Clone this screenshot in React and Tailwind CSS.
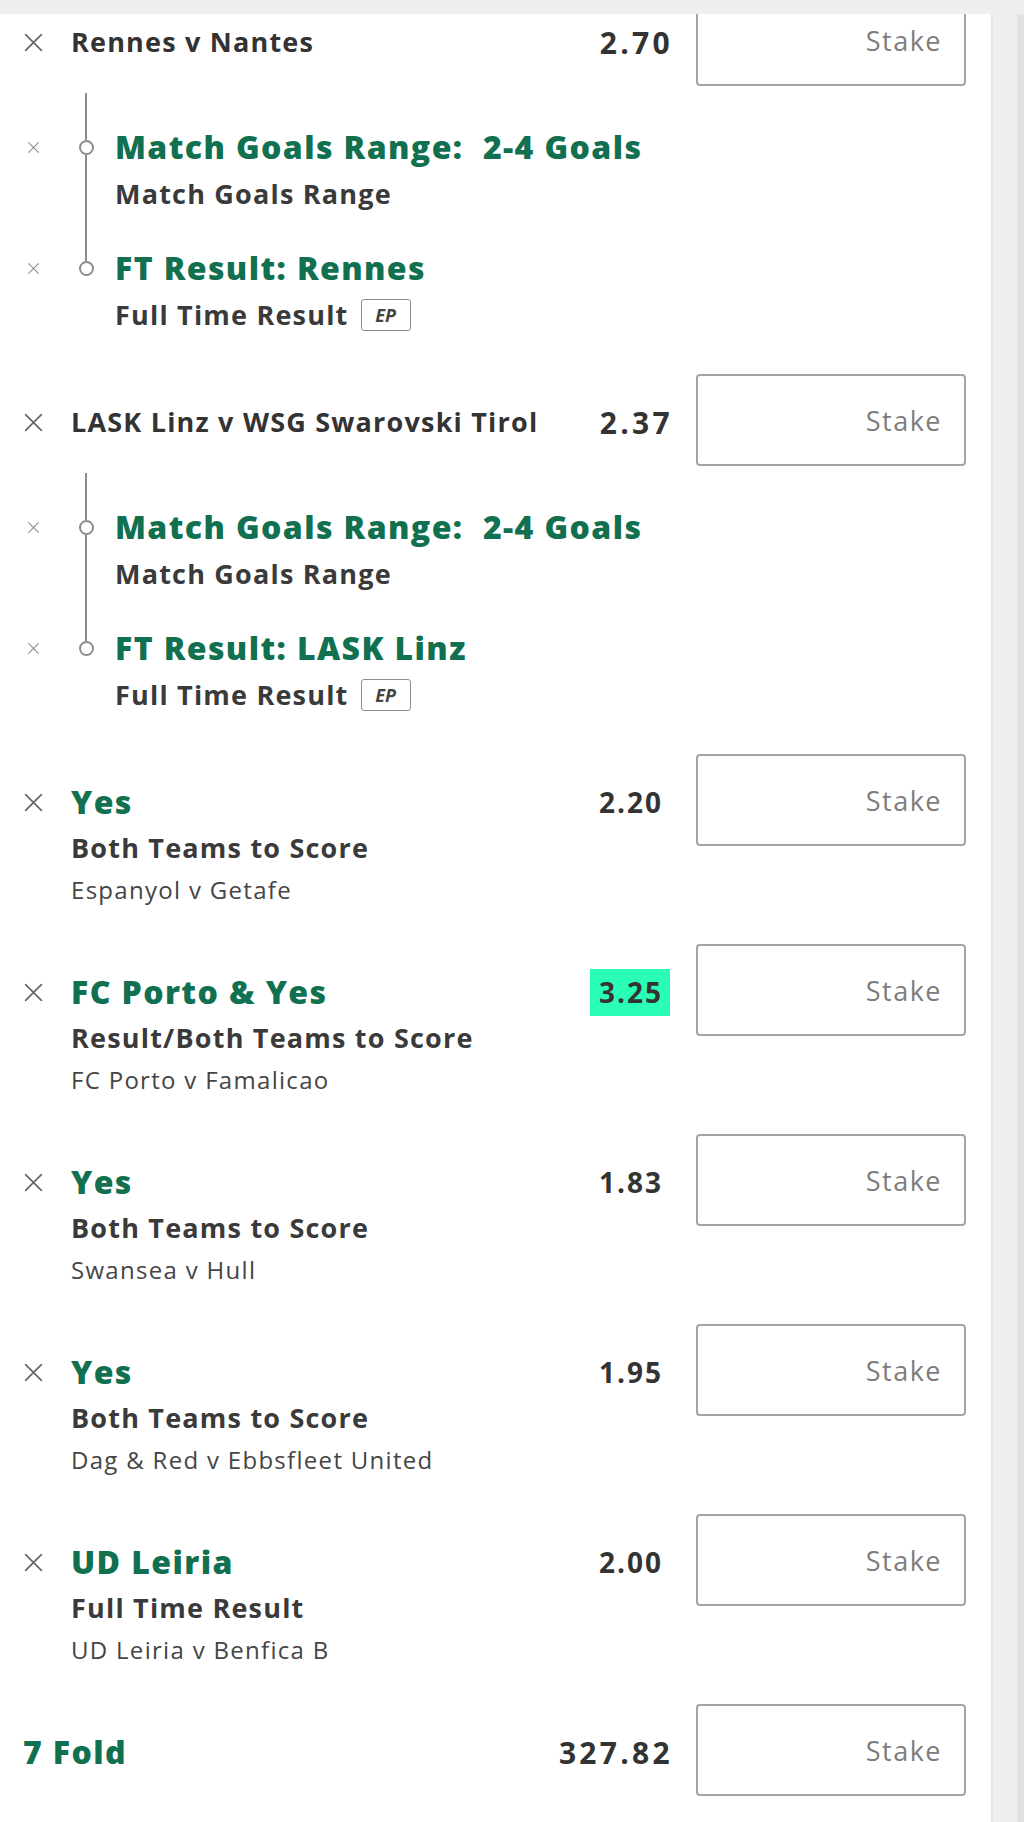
import React from 'react';

const legsRennes = [
  { title: 'Match Goals Range:\u00a0\u00a02-4 Goals', market: 'Match Goals Range' },
  { title: 'FT Result: Rennes', market: 'Full Time Result', ep: true },
];

const legsLask = [
  { title: 'Match Goals Range:\u00a0\u00a02-4 Goals', market: 'Match Goals Range' },
  { title: 'FT Result: LASK Linz', market: 'Full Time Result', ep: true },
];

const singles = [
  { title: 'Yes', odds: '2.20', market: 'Both Teams to Score', event: 'Espanyol v Getafe' },
  { title: 'FC Porto & Yes', odds: '3.25', market: 'Result/Both Teams to Score', event: 'FC Porto v Famalicao', boosted: true },
  { title: 'Yes', odds: '1.83', market: 'Both Teams to Score', event: 'Swansea v Hull' },
  { title: 'Yes', odds: '1.95', market: 'Both Teams to Score', event: 'Dag & Red v Ebbsfleet United' },
  { title: 'UD Leiria', odds: '2.00', market: 'Full Time Result', event: 'UD Leiria v Benfica B' },
];

const Cross = ({ className }) => (
  <svg viewBox="0 0 20 20" className={className} fill="none" stroke="currentColor" strokeWidth="1.6" strokeLinecap="round">
    <path d="M2.5 2.5L17.5 17.5M17.5 2.5L2.5 17.5" />
  </svg>
);

const StakeBox = () => (
  <input
    type="text"
    placeholder="Stake"
    className="ml-[26px] -mt-[28px] -mb-[24px] h-[92px] w-[270px] shrink-0 rounded-[4px] border-2 border-[#a4a4a4] bg-white pr-[22px] text-right text-[27px] tracking-[1.5px] text-[#333] placeholder-[#7c7c7c] outline-none"
  />
);

// one selection of a bet builder; the connector line lives in the middle column
const Leg = ({ leg, last }) => (
  <div className="flex">
    <div className="flex h-[76px] w-[67px] shrink-0 items-end justify-center pb-[15px]">
      <Cross className="h-[13px] w-[13px] text-[#8a8a8a]" />
    </div>
    <div className="flex w-[38px] shrink-0 flex-col items-center">
      <div className="h-[47px] w-[2px] bg-[#8c8c8c]" />
      <div className="h-[15px] w-[15px] shrink-0 rounded-full border-2 border-[#8c8c8c] bg-white" />
      {!last && <div className="w-[2px] flex-1 bg-[#8c8c8c]" />}
    </div>
    <div className="pl-[10px] pt-[32px]">
      <div className="flex h-[44px] items-center text-[32px] font-extrabold tracking-[1.4px] text-[#11704f]">{leg.title}</div>
      <div className="mt-[5px] flex h-[40px] items-center text-[27px] font-bold tracking-[1.2px] text-[#3a3a3a]">
        {leg.market}
        {leg.ep && (
          <span className="ml-[12px] flex h-[32px] w-[50px] items-center justify-center rounded-[3px] border-[1.5px] border-[#8e8e8e] text-[18px] font-bold italic tracking-normal text-[#444]">
            EP
          </span>
        )}
      </div>
    </div>
  </div>
);

const MultiRow = ({ title, odds, legs }) => (
  <div className="pb-[67px]">
    <div className="flex h-[40px] items-center">
      <div className="w-[71px] shrink-0 pl-[23px]">
        <Cross className="h-[21px] w-[21px] text-[#666]" />
      </div>
      <div className="flex-1 text-[27px] font-bold tracking-[1.2px] text-[#333]">{title}</div>
      <div className="-mr-[3px] text-[30px] font-bold tracking-[3.3px] text-[#333]">{odds}</div>
      <StakeBox />
    </div>
    <div className="mt-[31px]">
      {legs.map((leg, i) => (
        <Leg key={i} leg={leg} last={i === legs.length - 1} />
      ))}
    </div>
  </div>
);

const SingleRow = ({ s }) => (
  <div className="pb-[64px]">
    <div className="flex h-[40px] items-center">
      <div className="w-[71px] shrink-0 pl-[23px]">
        <Cross className="h-[21px] w-[21px] text-[#666]" />
      </div>
      <div className="flex-1 text-[32px] font-extrabold tracking-[1.4px] text-[#11704f]">{s.title}</div>
      <div
        className={`flex h-[47px] items-center pl-[9px] pr-[7px] text-[28px] font-bold tracking-[2px] text-[#333] ${
          s.boosted ? 'bg-[#29fdb6]' : ''
        }`}
      >
        {s.odds}
      </div>
      <StakeBox />
    </div>
    <div className="mt-[6px] pl-[71px] text-[27px] font-bold leading-[40px] tracking-[1.2px] text-[#3a3a3a]">{s.market}</div>
    <div className="mt-[4px] pl-[71px] text-[24px] leading-[36px] tracking-[1.3px] text-[#454545]">{s.event}</div>
  </div>
);

export default function App() {
  return (
    <div className="flex h-[1822px] w-[1024px] flex-col overflow-hidden bg-[#efefef] font-['Open_Sans','Noto_Sans',sans-serif]">
      <div className="h-[14px] shrink-0 bg-[#efefef]" />
      <div className="flex min-h-0 flex-1">
        <div className="w-[991px] shrink-0 overflow-hidden bg-white pr-[25px] pt-[8px]">
          <MultiRow title="Rennes v Nantes" odds="2.70" legs={legsRennes} />
          <MultiRow title="LASK Linz v WSG Swarovski Tirol" odds="2.37" legs={legsLask} />
          {singles.map((s, i) => (
            <SingleRow key={i} s={s} />
          ))}
          <div className="flex h-[40px] items-center">
            <div className="flex-1 pl-[23px] text-[32px] font-extrabold tracking-[1.4px] text-[#11704f]">7 Fold</div>
            <div className="-mr-[3px] text-[30px] font-bold tracking-[3.3px] text-[#333]">327.82</div>
            <StakeBox />
          </div>
        </div>
        <div className="flex flex-1 border-l-2 border-[#e6e6e6]">
          <div className="flex-1" />
          <div className="w-[7px] bg-[#e2e2e2]" />
        </div>
      </div>
    </div>
  );
}
